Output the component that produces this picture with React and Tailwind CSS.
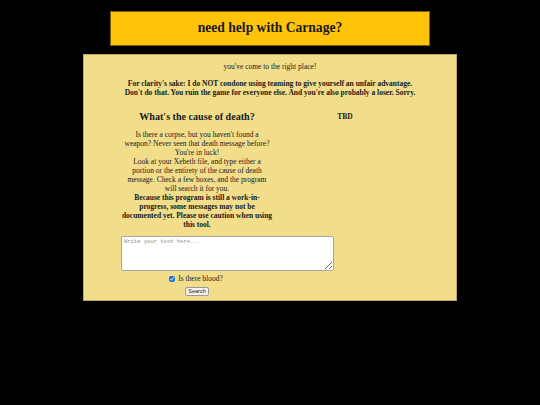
import React from 'react';

const serif = { fontFamily: '"Liberation Serif", "Times New Roman", serif' };

const intro = [
  "Is there a corpse, but you haven't found a",
  'weapon? Never seen that death message before?',
  "You're in luck!",
  'Look at your Xebeth file, and type either a',
  'portion or the entirety of the cause of death',
  'message. Check a few boxes, and the program',
  'will search it for you.',
];

const warning = [
  'Because this program is still a work-in-',
  'progress, some messages may not be',
  'documented yet. Please use caution when using',
  'this tool.',
];

const App = () => {
  return (
    <div className="min-h-screen bg-black pt-[11px]" style={serif}>
      {/* Banner */}
      <div className="mx-auto flex h-[35px] w-[320px] items-center justify-center border border-[#7a6000] bg-[#ffc409]">
        <h1 className="text-[13.6px] font-bold text-[#1a1a1a]">need help with Carnage?</h1>
      </div>

      {/* Main panel */}
      <div className="mx-auto mt-[8px] h-[247px] w-[374px] border border-[#b9a866] bg-[#f1dd8a] pt-[7px] text-center text-[7.5px] leading-[9px] text-[#1a1a1a]">
        <p>you've come to the right place!</p>
        <p className="mt-[9px] font-bold leading-[8.5px]">
          For clarity's sake: I do NOT condone using teaming to give yourself an unfair advantage.
          <br />
          Don't do that. You ruin the game for everyone else. And you're also probably a loser. Sorry.
        </p>

        <div className="mt-[14px] flex pl-[37px]">
          {/* Search tool */}
          <div className="flex w-[152px] flex-col">
            <h2 className="text-[10.1px] font-bold leading-[12px]">What's the cause of death?</h2>
            <div className="mt-[7px] whitespace-nowrap">
              {intro.map((line) => (
                <p key={line}>{line}</p>
              ))}
              {warning.map((line) => (
                <p key={line} className="font-bold">
                  {line}
                </p>
              ))}
            </div>
            <textarea
              placeholder="Write your text here..."
              className="mt-[7px] h-[35px] w-[213px] shrink-0 resize rounded-[2px] border border-[#a7a7a7] bg-white px-[2px] py-[1px] text-[5.5px] leading-[7px] placeholder:text-[#8a8a8a]"
              style={{ fontFamily: '"Liberation Mono", monospace' }}
            />
            <label className="mt-[3px] flex items-center justify-center gap-[3px] pr-[2px]">
              <input type="checkbox" defaultChecked className="m-0 h-[6px] w-[6px] accent-[#1a6fd8]" />
              <span>Is there blood?</span>
            </label>
            <div className="mt-[4px] flex justify-center">
              <button
                className="h-[9px] w-[24px] rounded-[2px] border border-[#9a9a9a] bg-[#f2f2f2] text-[5.5px] leading-[7px]"
                style={{ fontFamily: '"Liberation Sans", Arial, sans-serif' }}
              >
                Search
              </button>
            </div>
          </div>

          {/* Second tool */}
          <div className="w-[144px] pt-[1px]">
            <p className="font-bold">TBD</p>
          </div>
        </div>
      </div>
    </div>
  );
};

export default App;
